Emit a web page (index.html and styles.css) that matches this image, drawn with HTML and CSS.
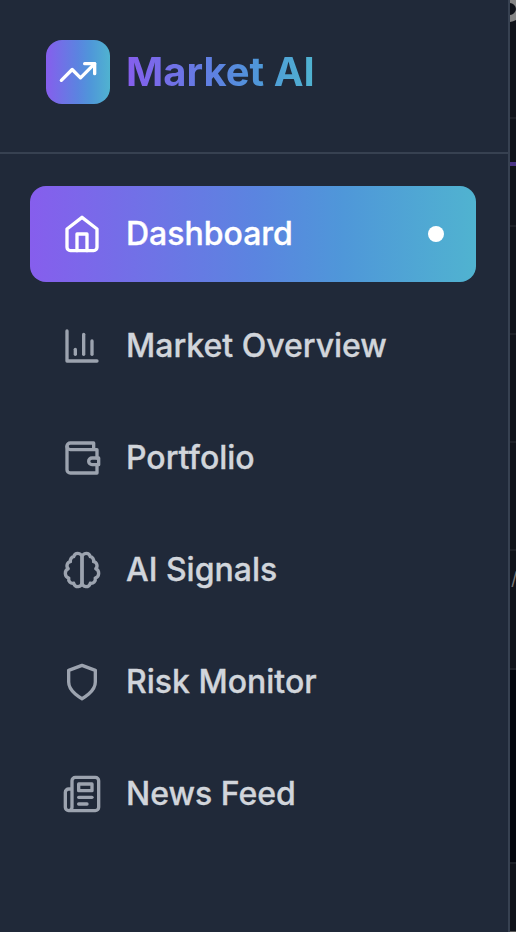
FILE: index.html
```html
<!DOCTYPE html>
<html lang="en">
<head>
<meta charset="utf-8">
<title>Market AI</title>
<link rel="stylesheet" href="styles.css">
</head>
<body>
<div class="app">
  <aside class="sidebar">
    <header class="brand">
      <div class="brand-mark">
        <svg class="icon" viewBox="0 0 24 24"><path d="M22 7 13.5 15.5 8.5 10.5 2 17"/><path d="M16 7h6v6"/></svg>
      </div>
      <span class="brand-name">Market AI</span>
    </header>
    <nav class="nav">
      <a class="item active">
        <svg class="icon" viewBox="0 0 24 24"><path d="m3 9 9-7 9 7v11a2 2 0 0 1-2 2H5a2 2 0 0 1-2-2z"/><path d="M9 22V12h6v10"/></svg>
        <span>Dashboard</span><i class="dot"></i>
      </a>
      <a class="item">
        <svg class="icon" viewBox="0 0 24 24"><path d="M3 3v18h18"/><path d="M18 17V9"/><path d="M13 17V5"/><path d="M8 17v-3"/></svg>
        <span>Market Overview</span>
      </a>
      <a class="item">
        <svg class="icon" viewBox="0 0 24 24"><path d="M21 12V7H5a2 2 0 0 1 0-4h14v4"/><path d="M3 5v14a2 2 0 0 0 2 2h16v-5"/><path d="M18 12a2 2 0 0 0 0 4h4v-4Z"/></svg>
        <span>Portfolio</span>
      </a>
      <a class="item">
        <svg class="icon" viewBox="0 0 24 24"><path d="M9.5 2A2.5 2.5 0 0 1 12 4.5v15a2.5 2.5 0 0 1-4.96.44 2.5 2.5 0 0 1-2.96-3.08 3 3 0 0 1-.34-5.58 2.5 2.5 0 0 1 1.32-4.24 2.5 2.5 0 0 1 1.98-3A2.5 2.5 0 0 1 9.5 2Z"/><path d="M14.5 2A2.5 2.5 0 0 0 12 4.5v15a2.5 2.5 0 0 0 4.96.44 2.5 2.5 0 0 0 2.96-3.08 3 3 0 0 0 .34-5.58 2.5 2.5 0 0 0-1.32-4.24 2.5 2.5 0 0 0-1.98-3A2.5 2.5 0 0 0 14.5 2Z"/></svg>
        <span>AI Signals</span>
      </a>
      <a class="item">
        <svg class="icon" viewBox="0 0 24 24"><path d="M12 22s8-4 8-10V5l-8-3-8 3v7c0 6 8 10 8 10"/></svg>
        <span>Risk Monitor</span>
      </a>
      <a class="item">
        <svg class="icon" viewBox="0 0 24 24"><path d="M4 22h16a2 2 0 0 0 2-2V4a2 2 0 0 0-2-2H8a2 2 0 0 0-2 2v16a2 2 0 0 1-2 2Zm0 0a2 2 0 0 1-2-2v-9c0-1.1.9-2 2-2h2"/><path d="M18 14h-8"/><path d="M15 18h-5"/><path d="M10 6h8v4h-8V6Z"/></svg>
        <span>News Feed</span>
      </a>
    </nav>
  </aside>
  <main class="page">
    <div class="row heading"><i class="heading-edge"></i></div>
    <div class="row tabs"><i class="tab-line"></i></div>
    <div class="row"></div>
    <div class="row"></div>
    <div class="row"></div>
    <div class="row tall"><span class="slash">/</span></div>
    <div class="gap"></div>
    <div class="row last"></div>
  </main>
</div>
</body>
</html>
```
FILE: styles.css
```css
* { box-sizing: border-box; }
body { margin: 0; overflow: hidden; font-family: Inter, sans-serif; }
.app { display: flex; width: 516px; height: 932px; overflow: hidden; background: #03060e; }
.sidebar { flex: 0 0 510px; background: #202939; border-right: 2px solid #374151; }
.brand { display: flex; align-items: center; gap: 16px; height: 154px; padding: 0 46px 10px; border-bottom: 2px solid #374151; }
.brand-mark, .active { background: linear-gradient(90deg, #865eed 0%, #5b84e0 50%, #4f97d9 70%, #50b3d0 100%); }
.brand-mark { display: flex; align-items: center; justify-content: center; width: 64px; height: 64px; border-radius: 16px; color: #fff; margin-top: 2px; }
.brand-name { margin-top: 2px; font-size: 40px; line-height: 56px; font-weight: 700; background: linear-gradient(90deg, #865eed 0%, #5b84e0 50%, #4f97d9 70%, #50b3d0 100%); -webkit-background-clip: text; background-clip: text; color: transparent; }
.icon { flex: none; width: 40px; height: 40px; fill: none; stroke: currentColor; stroke-width: 2; stroke-linecap: round; stroke-linejoin: round; }
.nav { display: flex; flex-direction: column; gap: 16px; padding: 32px 32px 0 30px; }
.item { display: flex; align-items: center; gap: 24px; height: 96px; padding: 0 32px; border-radius: 16px; color: #d1d5db; font-size: 32px; font-weight: 500; line-height: 48px; -webkit-text-stroke: 0.35px currentColor; }
.item .icon { color: #9ca3af; }
.item.active, .item.active .icon { color: #fff; }
.dot { width: 16px; height: 16px; margin-left: auto; border-radius: 50%; background: #fff; }
.page { flex: 1; min-width: 0; display: flex; flex-direction: column; overflow: hidden; }
.row { flex: none; height: 108px; overflow: hidden; background: #10131a; border-bottom: 2px solid #1d2027; }
.heading { height: 119px; }
.heading-edge { display: block; width: 30px; height: 26px; margin: -4px 0 0 -18px; border: 7px solid #858585; border-right-width: 6px; border-radius: 13px; }
.tabs { padding-top: 43px; }
.tab-line { display: block; height: 4px; background: #4a3486; }
.tall { height: 119px; padding-top: 16px; }
.slash { display: block; margin-left: 1px; color: #777; font-size: 18px; line-height: 24px; }
.gap { flex: none; height: 192px; }
.last { height: 70px; border-top: 2px solid #1d2027; border-bottom: 1px solid #555; }
```
